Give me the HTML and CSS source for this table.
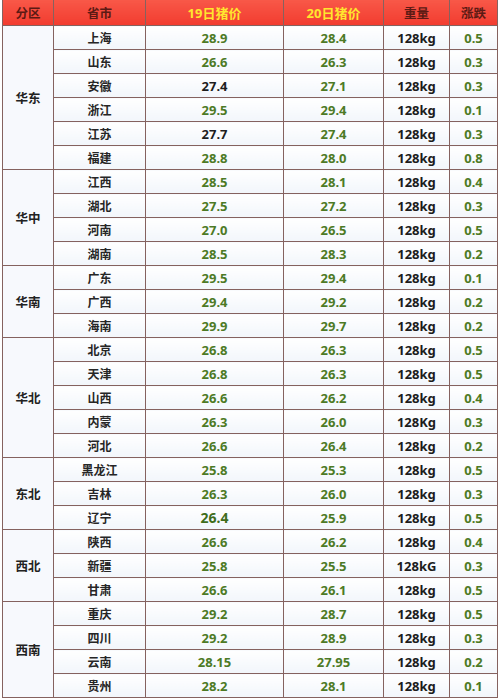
FILE: index.html
```html
<!DOCTYPE html>
<html lang="zh">
<head>
<meta charset="utf-8">
<title>猪价表</title>
<link rel="stylesheet" href="styles.css">
</head>
<body>
<table class="price-table">
  <colgroup>
    <col class="c-region"><col class="c-city"><col class="c-p19"><col class="c-p20"><col class="c-wt"><col class="c-chg">
  </colgroup>
  <thead>
    <tr>
      <th>分区</th><th>省市</th><th class="hl">19日猪价</th><th class="hl">20日猪价</th><th>重量</th><th>涨跌</th>
    </tr>
  </thead>
  <tbody>
    <tr><td class="region" rowspan="6">华东</td><td class="city">上海</td><td class="num">28.9</td><td class="num">28.4</td><td class="wt">128kg</td><td class="num">0.5</td></tr>
    <tr><td class="city">山东</td><td class="num">26.6</td><td class="num">26.3</td><td class="wt">128kg</td><td class="num">0.3</td></tr>
    <tr><td class="city">安徽</td><td class="num dark">27.4</td><td class="num">27.1</td><td class="wt">128kg</td><td class="num">0.3</td></tr>
    <tr><td class="city">浙江</td><td class="num">29.5</td><td class="num">29.4</td><td class="wt">128kg</td><td class="num">0.1</td></tr>
    <tr><td class="city">江苏</td><td class="num dark">27.7</td><td class="num">27.4</td><td class="wt">128kg</td><td class="num">0.3</td></tr>
    <tr><td class="city">福建</td><td class="num">28.8</td><td class="num">28.0</td><td class="wt">128kg</td><td class="num">0.8</td></tr>

    <tr><td class="region" rowspan="4">华中</td><td class="city">江西</td><td class="num">28.5</td><td class="num">28.1</td><td class="wt">128kg</td><td class="num">0.4</td></tr>
    <tr><td class="city">湖北</td><td class="num">27.5</td><td class="num">27.2</td><td class="wt">128kg</td><td class="num">0.3</td></tr>
    <tr><td class="city">河南</td><td class="num">27.0</td><td class="num">26.5</td><td class="wt">128kg</td><td class="num">0.5</td></tr>
    <tr><td class="city">湖南</td><td class="num">28.5</td><td class="num">28.3</td><td class="wt">128kg</td><td class="num">0.2</td></tr>

    <tr><td class="region" rowspan="3">华南</td><td class="city">广东</td><td class="num">29.5</td><td class="num">29.4</td><td class="wt">128kg</td><td class="num">0.1</td></tr>
    <tr><td class="city">广西</td><td class="num">29.4</td><td class="num">29.2</td><td class="wt">128kg</td><td class="num">0.2</td></tr>
    <tr><td class="city">海南</td><td class="num">29.9</td><td class="num">29.7</td><td class="wt">128kg</td><td class="num">0.2</td></tr>

    <tr><td class="region" rowspan="5">华北</td><td class="city">北京</td><td class="num">26.8</td><td class="num">26.3</td><td class="wt">128kg</td><td class="num">0.5</td></tr>
    <tr><td class="city">天津</td><td class="num">26.8</td><td class="num">26.3</td><td class="wt">128kg</td><td class="num">0.5</td></tr>
    <tr><td class="city">山西</td><td class="num">26.6</td><td class="num">26.2</td><td class="wt">128kg</td><td class="num">0.4</td></tr>
    <tr><td class="city">内蒙</td><td class="num">26.3</td><td class="num">26.0</td><td class="wt">128Kg</td><td class="num">0.3</td></tr>
    <tr><td class="city">河北</td><td class="num">26.6</td><td class="num">26.4</td><td class="wt">128kg</td><td class="num">0.2</td></tr>

    <tr><td class="region" rowspan="3">东北</td><td class="city">黑龙江</td><td class="num">25.8</td><td class="num">25.3</td><td class="wt">128kg</td><td class="num">0.5</td></tr>
    <tr><td class="city">吉林</td><td class="num">26.3</td><td class="num">26.0</td><td class="wt">128kg</td><td class="num">0.3</td></tr>
    <tr><td class="city">辽宁</td><td class="num big">26.4</td><td class="num">25.9</td><td class="wt">128kg</td><td class="num">0.5</td></tr>

    <tr><td class="region" rowspan="3">西北</td><td class="city">陕西</td><td class="num">26.6</td><td class="num">26.2</td><td class="wt">128kg</td><td class="num">0.4</td></tr>
    <tr><td class="city">新疆</td><td class="num">25.8</td><td class="num">25.5</td><td class="wt">128kG</td><td class="num">0.3</td></tr>
    <tr><td class="city">甘肃</td><td class="num">26.6</td><td class="num">26.1</td><td class="wt">128kg</td><td class="num">0.5</td></tr>

    <tr><td class="region" rowspan="4">西南</td><td class="city">重庆</td><td class="num">29.2</td><td class="num">28.7</td><td class="wt">128kg</td><td class="num">0.5</td></tr>
    <tr><td class="city">四川</td><td class="num">29.2</td><td class="num">28.9</td><td class="wt">128kg</td><td class="num">0.3</td></tr>
    <tr><td class="city">云南</td><td class="num">28.15</td><td class="num">27.95</td><td class="wt">128kg</td><td class="num">0.2</td></tr>
    <tr><td class="city">贵州</td><td class="num">28.2</td><td class="num">28.1</td><td class="wt">128kg</td><td class="num">0.1</td></tr>
  </tbody>
</table>
</body>
</html>
```

FILE: styles.css
```css
html, body {
  margin: 0;
  padding: 0;
  background: #ffffff;
}

body {
  font-family: "Noto Sans", "Noto Sans CJK SC", sans-serif;
}

.price-table {
  margin-left: 2px;
  width: 495px;
  table-layout: fixed;
  border-collapse: collapse;
  font-weight: bold;
}

.c-region { width: 51px; }
.c-city { width: 92px; }
.c-p19 { width: 138px; }
.c-p20 { width: 100px; }
.c-wt { width: 66px; }
.c-chg { width: 48px; }

.price-table th {
  height: 25px;
  padding: 0;
  background: linear-gradient(#f85848, #f23c2f);
  color: #5c1a14;
  font-family: "Noto Sans CJK SC", sans-serif;
  font-size: 12.5px;
  font-weight: bold;
  text-align: center;
  border: 1px solid #85625f;
  border-top: none;
}

.price-table th.hl {
  color: #ffe62e;
  font-family: "Noto Sans", "Noto Sans CJK SC", sans-serif;
  font-size: 13px;
}

.price-table td {
  height: 23px;
  padding: 0;
  text-align: center;
  border: 1px solid #85625f;
  background: linear-gradient(#ffffff, #f2f6fb);
  font-size: 13px;
  line-height: 16px;
}

.price-table td.region {
  background: #f7f9fd;
  font-family: "Noto Sans CJK SC", sans-serif;
  font-size: 12.5px;
  color: #222222;
}

.price-table td.city {
  font-family: "Noto Sans CJK SC", sans-serif;
  font-size: 12px;
  color: #262626;
}

.price-table td.num {
  color: #4d7a25;
}

.price-table td.num.dark {
  color: #1e1e1e;
}

.price-table td.num.big {
  font-size: 14px;
  color: #3f6d1c;
}

.price-table td.wt {
  color: #1c1c1c;
}
```
